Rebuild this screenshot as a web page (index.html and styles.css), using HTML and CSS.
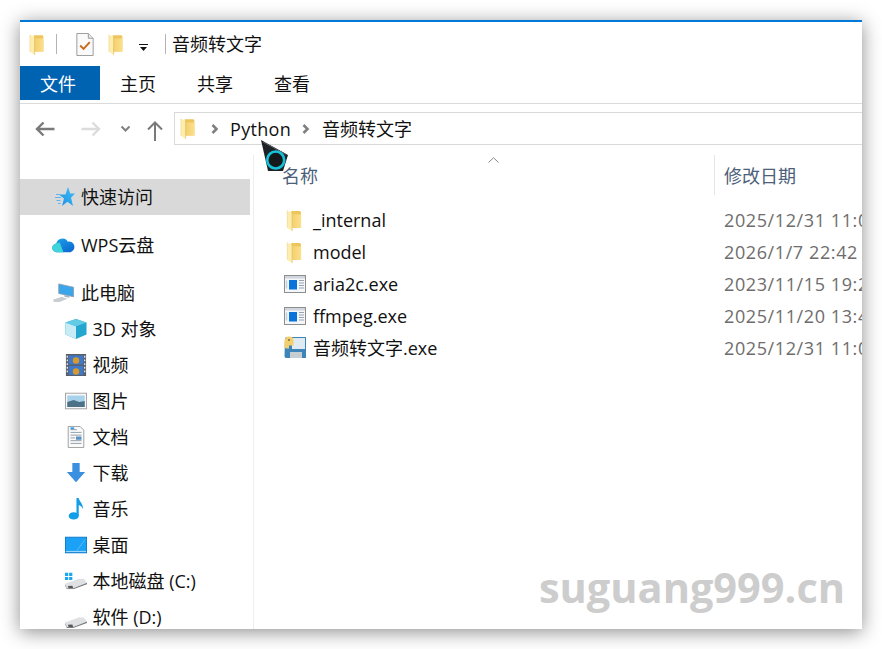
FILE: index.html
```html
<!DOCTYPE html>
<html lang="zh-CN">
<head>
<meta charset="utf-8">
<title>音频转文字</title>
<link rel="stylesheet" href="styles.css">
</head>
<body>
<svg class="defs" width="0" height="0" aria-hidden="true">
  <defs>
    <linearGradient id="star-grad" x1="0" y1="1" x2="1" y2="0">
      <stop offset="0" stop-color="#1f8fe6"/>
      <stop offset="1" stop-color="#3cc0f5"/>
    </linearGradient>
    <linearGradient id="folder-grad" x1="0" y1="0" x2="1" y2="0">
      <stop offset="0" stop-color="#f5cf6c"/>
      <stop offset="1" stop-color="#fbe08e"/>
    </linearGradient>
    <linearGradient id="wps-grad" x1="0" y1="0" x2="1" y2="1">
      <stop offset="0" stop-color="#1ea8e8"/>
      <stop offset="1" stop-color="#0a62d0"/>
    </linearGradient>
    <symbol id="folder" viewBox="0 0 16 22">
      <path d="M5 1h9.500l.8 1.500v16H5z" fill="#eec45c"/>
      <path d="M6 4.500h9.500v14H6z" fill="url(#folder-grad)"/>
      <path d="M1 .5l5 2.500v19L1 18.800z" fill="#fdeeb0"/>
      <path d="M6 3v19" stroke="#e5bf5e" stroke-width=".8"/>
      <path d="M1 .5v18.300" stroke="#efd488" stroke-width=".7"/>
    </symbol>
    <symbol id="exe" viewBox="0 0 22 18">
      <rect x=".5" y=".5" width="21" height="17" fill="#f4f7fa" stroke="#8d8d8d"/>
      <rect x="1" y="1" width="20" height="2.500" fill="#cfd6dd"/>
      <rect x="5" y="5" width="8" height="9.500" fill="#0a74da"/>
      <path d="M15 5.500h5M15 8h5M15 10.500h5M15 13h5" stroke="#9aa3ad"/>
      <path d="M2.500 5.500v8" stroke="#c6ced6" stroke-width="1.500"/>
    </symbol>
    <symbol id="drive" viewBox="0 0 24 12">
      <path d="M0 6L15 .5h5.500L24 5 9 11H2z" fill="#dfe1e3"/>
      <path d="M0 6.500L2 11h7l15-6v1.500L9 12H2L0 8z" fill="#7d7f82"/>
      <path d="M3 8.500l5-.2 1 2.500H4z" fill="#55585c"/>
    </symbol>
  </defs>
</svg>

<main class="window">
  <header class="titlebar">
    <svg class="ti-folder"><use href="#folder"/></svg>
    <span class="ti-sep first"></span>
    <svg class="ti-doc" viewBox="0 0 18 24">
      <path d="M.5.500h12l5 5v18H.5z" fill="#fafafa" stroke="#9a9a9a"/>
      <path d="M12.500.500v5h5" fill="#e8e8e8" stroke="#9a9a9a"/>
      <path d="M4 13l3.500 3.500L14 9.500" fill="none" stroke="#c8691c" stroke-width="2"/>
    </svg>
    <svg class="ti-folder two"><use href="#folder"/></svg>
    <svg class="ti-drop" viewBox="0 0 10 7"><path d="M0 0h9v1H0zM1 3h7L4.500 7z" fill="#111"/></svg>
    <span class="ti-sep"></span>
    <h1 class="title">音频转文字</h1>
  </header>

  <nav class="tabs">
    <span class="tab active">文件</span>
    <span class="tab">主页</span>
    <span class="tab">共享</span>
    <span class="tab">查看</span>
  </nav>

  <div class="navbar">
    <svg class="nav-arrow" viewBox="0 0 20 16"><path d="M19.500 8H2M8.500 1.500L2 8l6.500 6.500" fill="none" stroke="#7a7a7a" stroke-width="2.400"/></svg>
    <svg class="nav-arrow fwd" viewBox="0 0 20 16"><path d="M.5 8H18M11.500 1.500L18 8l-6.500 6.500" fill="none" stroke="#dcdcdc" stroke-width="2.400"/></svg>
    <svg class="nav-chev" viewBox="0 0 11 7"><path d="M1.500 1.500l4 4 4-4" fill="none" stroke="#808080" stroke-width="2"/></svg>
    <svg class="nav-up" viewBox="0 0 16 20"><path d="M8 20V2M1 8.500L8 1.500l7 7" fill="none" stroke="#7a7a7a" stroke-width="2"/></svg>
    <div class="address">
      <svg class="addr-folder"><use href="#folder"/></svg>
      <svg class="crumb" viewBox="0 0 8 10"><path d="M1.500 1l4 4-4 4" fill="none" stroke="#808080" stroke-width="2.600"/></svg>
      <span class="addr-text">Python</span>
      <svg class="crumb" viewBox="0 0 8 10"><path d="M1.500 1l4 4-4 4" fill="none" stroke="#808080" stroke-width="2.600"/></svg>
      <span class="addr-text cjk">音频转文字</span>
    </div>
  </div>

  <div class="content">
    <aside class="sidebar">
      <div class="side-row top selected">
        <svg class="side-icon" viewBox="0 0 20 20"><path d="M13 0l2.200 6.500H20l-4 4.300 2 8.200-5.500-4.200L7 19l2-7.500L4 7.500h6.500z" fill="url(#star-grad)"/><path d="M1 7.500h4M0 10.500h6M1.500 13.500h4M3 16.500h2.500" stroke="#5db5f0"/></svg>
        <span>快速访问</span>
      </div>
      <div class="side-row top group">
        <svg class="side-icon wide" viewBox="0 0 24 18"><path d="M5 16.500a4.500 4.500 0 0 1-.5-9 6.500 6.500 0 0 1 12-2 5.500 5.500 0 0 1 2.500 11z" fill="url(#wps-grad)"/><path d="M5 16.500a4.500 4.500 0 0 1-.5-9l3.500-1 4 10z" fill="#3fd4d8"/></svg>
        <span>WPS云盘</span>
      </div>
      <div class="side-row top group">
        <svg class="side-icon wide" viewBox="0 0 24 20"><path d="M7 .5l15.500 3.500v10L7 10.500z" fill="#3aa5ea" stroke="#8c9aa8" stroke-width=".8"/><path d="M13 12l5 1v2l-5-1z" fill="#a9b2ba"/><path d="M1 17l9-3 6 2-8 3.500H2z" fill="#c9cdd1"/></svg>
        <span>此电脑</span>
      </div>
      <div class="side-row">
        <svg class="side-icon" viewBox="0 0 24 22"><path d="M12 0l11.500 4v13L12 22 .5 17V4z" fill="#25a6cf"/><path d="M.5 4L12 8v14L.5 17z" fill="#c7ecf6"/><path d="M12 0l11.500 4L12 8 .5 4z" fill="#62cce6"/></svg>
        <span>3D 对象</span>
      </div>
      <div class="side-row">
        <svg class="side-icon" viewBox="0 0 24 24"><rect x="1" y="0" width="22" height="24" fill="#5a5f66"/><rect x="4" y="1.500" width="16" height="10" fill="#3f78c8"/><rect x="4" y="13" width="16" height="10" fill="#3f78c8"/><circle cx="12" cy="7" r="3.500" fill="#d89a2c"/><circle cx="12" cy="19" r="3.500" fill="#d89a2c"/><path d="M2.500 2v20M21.500 2v20" stroke="#e2e2e2" stroke-width="1.500" stroke-dasharray="2 2"/></svg>
        <span>视频</span>
      </div>
      <div class="side-row">
        <svg class="side-icon" viewBox="0 0 24 18"><rect x=".5" y=".5" width="23" height="17" fill="#f8f8f8" stroke="#a0a0a0"/><rect x="2.500" y="3" width="19" height="12.500" fill="#a8d2ec"/><path d="M2.500 10l7-2 6 2 6-1v6.500h-19z" fill="#4d7186"/></svg>
        <span>图片</span>
      </div>
      <div class="side-row">
        <svg class="side-icon" viewBox="0 0 24 24"><path d="M3.500.5h13l4 4v19h-17z" fill="#fafafa" stroke="#9a9a9a"/><path d="M6 4h7M6 7h12M6 10h12M6 13h5M6 16h12M6 19h12" stroke="#8c9aa8"/><rect x="12" y="11.500" width="6" height="3.500" fill="#5a8fc0"/><path d="M6 2.500h4" stroke="#2a9bee" stroke-width="2"/></svg>
        <span>文档</span>
      </div>
      <div class="side-row">
        <svg class="side-icon" viewBox="0 0 24 22"><path d="M8 0h8v10h6L12 21 2 10h6z" fill="#3b8fe0"/></svg>
        <span>下载</span>
      </div>
      <div class="side-row">
        <svg class="side-icon" viewBox="0 0 24 24"><ellipse cx="9.500" cy="19.500" rx="5.500" ry="4" fill="#129fe8"/><path d="M12.500 0h2.500c.5 4 5 6 4.500 12-1-2.500-3-4-4.500-4.500V19.500h-2.500z" fill="#129fe8"/></svg>
        <span>音乐</span>
      </div>
      <div class="side-row">
        <svg class="side-icon" viewBox="0 0 24 18"><rect x=".5" y=".5" width="23" height="17" fill="#1ba1f5" stroke="#0d78c8"/><path d="M1 16h22" stroke="#b8e2fb"/><path d="M13 15L22 3" stroke="#5cbcf8"/></svg>
        <span>桌面</span>
      </div>
      <div class="side-row">
        <svg class="side-icon" viewBox="0 0 24 18"><use href="#drive" x="0" y="6" width="24" height="12"/><path d="M0 0h3.500v3.500H0zM4.500 0H8v3.500H4.500zM0 4.500h3.500V8H0zM4.500 4.500H8V8H4.500z" fill="#19a7ee"/></svg>
        <span>本地磁盘 (C:)</span>
      </div>
      <div class="side-row">
        <svg class="side-icon drive-d" viewBox="0 0 24 12"><use href="#drive"/></svg>
        <span>软件 (D:)</span>
      </div>
    </aside>

    <section class="files">
      <div class="file-head">
        <div class="col-name head">名称
          <svg class="sort" viewBox="0 0 11 6"><path d="M.5 5.500L5.500 .8l5 4.700" fill="none" stroke="#888"/></svg>
        </div>
        <div class="col-date head">修改日期</div>
      </div>
      <div class="file-row">
        <div class="col-name"><svg class="file-icon folder"><use href="#folder"/></svg>_internal</div>
        <div class="col-date">2025/12/31 11:07</div>
      </div>
      <div class="file-row">
        <div class="col-name"><svg class="file-icon folder"><use href="#folder"/></svg>model</div>
        <div class="col-date">2026/1/7 22:42</div>
      </div>
      <div class="file-row">
        <div class="col-name"><svg class="file-icon exe"><use href="#exe"/></svg>aria2c.exe</div>
        <div class="col-date">2023/11/15 19:26</div>
      </div>
      <div class="file-row">
        <div class="col-name"><svg class="file-icon exe"><use href="#exe"/></svg>ffmpeg.exe</div>
        <div class="col-date">2025/11/20 13:45</div>
      </div>
      <div class="file-row">
        <div class="col-name">
          <svg class="file-icon app" viewBox="0 0 24 24">
            <path d="M2 3q0-2 2-2h19v21H3q-1.500 0-1.500-2z" fill="#3d85b8"/>
            <rect x="9" y="2" width="13" height="11" fill="#dfeaf2"/>
            <rect x="7" y="16" width="12" height="6" fill="#c7ced3"/>
            <path d="M1.500 6q0-5.500 4.500-5.500t4.500 3.500v5.500H6v3H3.500Q.5 12 1.500 6z" fill="#f3cf6f"/>
            <circle cx="6" cy="4" r="1" fill="#7a6a30"/>
          </svg>音频转文字.exe
        </div>
        <div class="col-date">2025/12/31 11:07</div>
      </div>
    </section>
  </div>

  <div class="watermark">suguang999.cn</div>
</main>

<svg class="cursor" viewBox="0 0 28 32" aria-hidden="true">
  <path d="M0 0l27 15-5 16H7z" fill="#1e2226"/>
  <path d="M2 2l23 12.500" stroke="#5a5f66"/>
  <circle cx="14.700" cy="20" r="8.500" fill="#16191c" stroke="#14c3da" stroke-width="2.600"/>
</svg>
</body>
</html>
```

FILE: styles.css
```css
* { box-sizing: border-box; }
html, body { height: 100%; }
body {
  margin: 0;
  background: #fff;
  overflow: hidden;
  font: 18px/24px "Open Sans", "Noto Sans CJK SC", sans-serif;
  color: #111;
  position: relative;
}
.defs { position: absolute; }
svg { display: block; flex: none; }

.window {
  position: absolute;
  left: 20px;
  top: 20px;
  width: 842px;
  height: 609px;
  background: #fff;
  border-top: 2px solid #0078d7;
  box-shadow: 0 3px 18px rgba(0, 0, 0, .45);
  overflow: hidden;
}

/* title bar */
.titlebar {
  height: 44px;
  display: flex;
  align-items: center;
  padding-left: 9px;
}
.ti-folder { width: 15px; height: 21px; }
.ti-folder.two { margin-left: 14px; margin-top: 1px; }
.ti-sep { width: 1px; height: 20px; background: #b4b4b4; margin-left: 16px; }
.ti-sep.first { margin-left: 12px; }
.ti-sep.first + .ti-doc { margin-left: 19px; }
.ti-doc { width: 18px; height: 23px; }
.ti-drop { width: 10px; height: 7px; margin-left: 16px; margin-top: 6px; }
.title { font: inherit; margin: 0 0 0 6px; }

/* ribbon tabs */
.tabs {
  height: 38px;
  display: flex;
  gap: 1px;
  align-items: flex-start;
  border-bottom: 1px solid #dadada;
}
.tab { height: 34px; padding: 0 20px; line-height: 36px; width: 76px; }
.tab.active { width: 80px; background: #0063b1; color: #fff; margin-right: -1px; }

/* nav row */
.navbar {
  height: 41px;
  display: flex;
  align-items: flex-start;
  padding: 8px 0 0 15px;
}
.nav-arrow { width: 20px; height: 16px; margin-top: 9px; }
.nav-arrow.fwd { margin-left: 26px; }
.nav-chev { width: 11px; height: 7px; margin: 13px 0 0 19px; }
.nav-up { width: 16px; height: 20px; margin: 9px 0 0 16px; }
.address {
  flex: none;
  width: 700px;
  height: 33px;
  margin-left: 11px;
  border: 1px solid #d9d9d9;
  display: flex;
  align-items: center;
  padding-left: 5px;
}
.addr-folder { width: 15px; height: 21px; }
.crumb { width: 8px; height: 10px; margin: 1px 11px 0 16px; }
.addr-text { letter-spacing: .3px; }
.addr-text.cjk { letter-spacing: 0; }
.addr-text + .crumb { margin-left: 11px; margin-right: 12px; }

/* main area */
.content { display: flex; height: 484px; }
.sidebar { width: 233px; padding-top: 34px; flex: none; }
.side-row {
  width: 230px;
  height: 36px;
  display: flex;
  align-items: center;
  gap: 5.5px;
  padding-left: 45px;
}
.side-row.top { gap: 6px; padding-left: 35px; }
.side-row.group { margin-top: 12px; }
.side-row.selected { background: #d9d9d9; }
.side-icon { width: 22px; height: 22px; }
.side-row.top .side-icon { width: 20px; height: 20px; }
.side-row.top .side-icon.wide { width: 23px; height: 20px; margin-left: -3px; }
.drive-d { height: 11px !important; margin-top: 11px; }

/* file list */
.files {
  flex: 1;
  min-width: 0;
  padding-top: 10px;
  position: relative;
}
.files::before {
  content: "";
  position: absolute;
  left: 0;
  top: 10px;
  bottom: 0;
  width: 1px;
  background: #eeeeee;
}
.file-head { height: 40px; display: flex; align-items: center; color: #4c607a; margin-bottom: 9px; }
.file-row { height: 32px; display: flex; align-items: center; }
.col-name { width: 461px; flex: none; display: flex; align-items: center; position: relative; padding-left: 60px; }
.col-name.head { width: 462px; height: 40px; padding: 2px 0 0 29px; border-right: 1px solid #e5e5e5; }
.col-date { padding-left: 10px; white-space: nowrap; color: #6d6d6d; letter-spacing: .6px; }
.col-date.head { color: #4c607a; letter-spacing: 0; padding: 2px 0 0 9px; }
.sort { position: absolute; left: 235px; top: 2px; width: 11px; height: 6px; }
.file-icon { margin-left: -30px; margin-right: 6px; }
.file-icon.folder { width: 16px; height: 21px; margin-left: -27px; margin-right: 11px; }
.file-icon.exe { width: 22px; height: 18px; margin-left: -29px; margin-right: 7px; }
.file-icon.app { width: 24px; height: 24px; margin-left: -30px; margin-right: 6px; }

/* overlays */
.watermark {
  position: absolute;
  right: 17px;
  bottom: 17px;
  font: bold 41.5px/50px "Open Sans", sans-serif;
  color: #cdcdcd;
}
.cursor { position: absolute; left: 261px; top: 140px; width: 28px; height: 32px; }
```
